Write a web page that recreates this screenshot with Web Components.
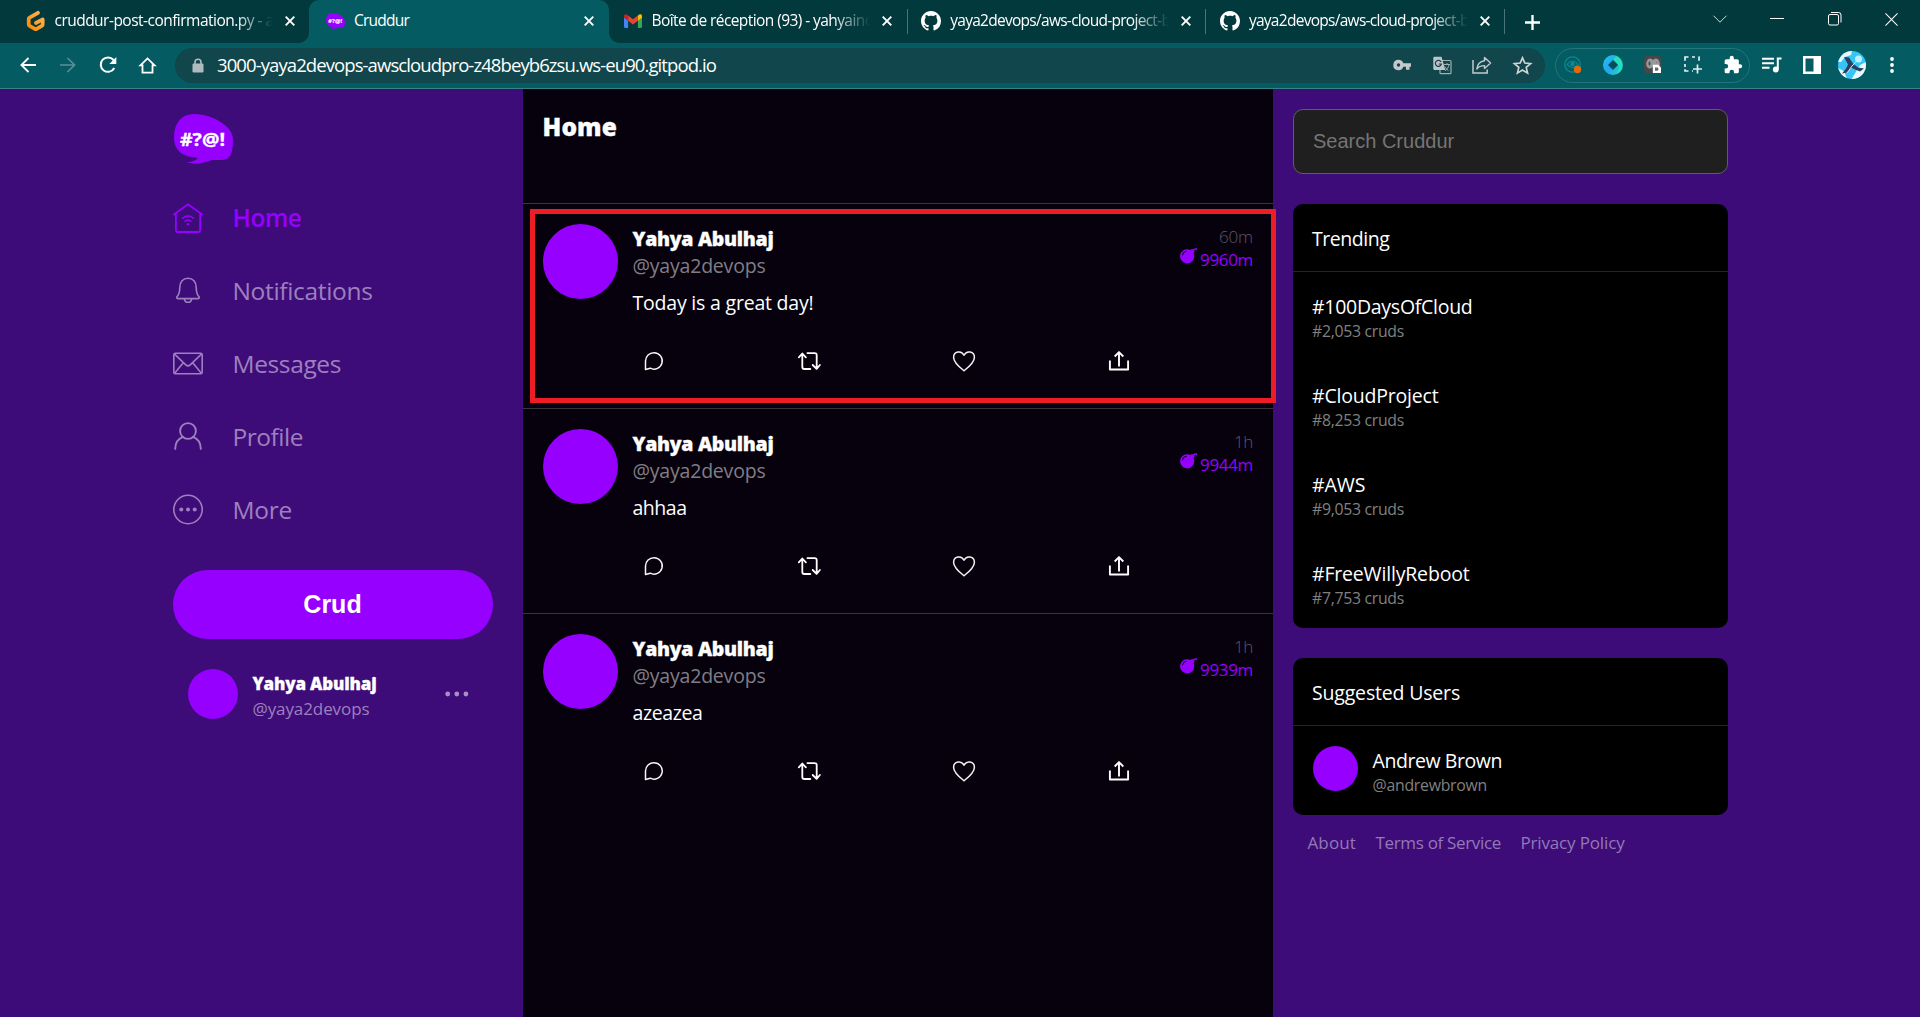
<!DOCTYPE html>
<html lang="fr">
<head>
<meta charset="utf-8">
<title>Cruddur</title>
<style>
html,body{margin:0;height:100%;overflow:hidden;background:#3d0c79}
body{font-family:"Open Sans","Noto Sans",sans-serif}
</style>
</head>
<body>
<cruddur-window></cruddur-window>
<script>
const ICONS = {
  home: ['0 0 30 30', '<g fill="none" stroke="currentColor" stroke-width="1.8" stroke-linecap="round" stroke-linejoin="round"><path d="M.9 11.6 15 1.3l14.1 10.3M2.9 10.4V27a2 2 0 0 0 2 2h20.2a2 2 0 0 0 2-2V10.4"/><path d="M9.6 15.2a8 8 0 0 1 10.8 0M12 18.2a4.6 4.6 0 0 1 6 0" stroke-width="1.5"/></g><circle cx="15" cy="21.2" r="1.3" fill="currentColor"/>'],
  bell: ['0 0 30 30', '<g fill="none" stroke="currentColor" stroke-width="1.6" stroke-linejoin="round"><path d="M6.8 11.2C6.8 6 10 2.2 15 2.2s8.200 3.800 8.200 9c0 5 .9 7.400 2.700 9.400.8 1 .4 2-.8 2H4.900c-1.200 0-1.600-1-.8-2 1.800-2 2.700-4.400 2.700-9.400z"/><path d="M11.300 22.800c.4 2.400 1.800 3.500 3.700 3.500s3.300-1.100 3.700-3.500"/></g>'],
  mail: ['0 0 30 30', '<g fill="none" stroke="currentColor" stroke-width="1.6" stroke-linejoin="round"><rect x=".8" y="4.300" width="28.400" height="20.400" rx="1.500"/><path d="m1.300 4.800 11.500 11c1.300 1.200 3.100 1.200 4.400 0l11.500-11M1.600 24.200l8.700-10.400M28.400 24.200l-8.700-10.400"/></g>'],
  user: ['0 0 30 30', '<g fill="none" stroke="currentColor" stroke-width="1.9" stroke-linecap="round"><circle cx="15" cy="9" r="7.900"/><path d="M2.200 26.900c0-6 3.300-10.300 7.900-12M27.800 26.900c0-6-3.300-10.300-7.900-12"/></g>'],
  more: ['0 0 30 30', '<circle cx="15" cy="14.500" r="14.200" fill="none" stroke="currentColor" stroke-width="1.600"/><g fill="currentColor"><circle cx="8.300" cy="14.500" r="2"/><circle cx="15" cy="14.500" r="2"/><circle cx="21.700" cy="14.500" r="2"/></g>'],
  dots: ['0 0 24 6', '<g fill="currentColor"><circle cx="2.700" cy="3" r="2.400"/><circle cx="11.800" cy="3" r="2.400"/><circle cx="20.900" cy="3" r="2.400"/></g>'],
  bomb: ['0 0 17 15', '<path fill="currentColor" d="M7 1.200c1.400 0 2.500.3 3.500.9L12 .8l.9.6C14 .3 15.500-.2 17 .4v2.300l-.8-.9c-.9-.2-1.600.1-2.200.7l.7.9-1.100 1.500c.4.900.6 1.800.6 2.800A7.100 7.100 0 1 1 7 1.200z"/><path d="M2.400 7.300A4.600 4.600 0 0 1 6.800 3.200" fill="none" stroke="#07010e" stroke-width="1"/>'],
  reply: ['0 0 20 20', '<path d="M10.100 1.700a8.200 8.200 0 1 1-3.800 15.500L1.500 18.500V10a8.400 8.400 0 0 1 8.600-8.300z" fill="none" stroke="#f6f6f6" stroke-width="1.500" stroke-linejoin="round"/>'],
  repost: ['0 0 22 20', '<path d="M.8 6.400 4.300 2.500 7.900 6.400M4.300 3v13a2 2 0 0 0 2 2h6M9.400 2.100h7.300a2 2 0 0 1 2 2v13.200M14.700 14l3.900 3.900 3.300-3.900" fill="none" stroke="#fff" stroke-width="1.800" stroke-linecap="round" stroke-linejoin="round"/>'],
  heart: ['0 0 24 22', '<path d="M12 20.800C8.500 18 1.600 12.500 1.600 7.400c0-5.900 7.800-7.600 10.400-2.100 2.600-5.500 10.400-3.800 10.400 2.100 0 5.100-6.900 10.600-10.400 13.400z" fill="none" stroke="#f2f2f2" stroke-width="1.500" stroke-linejoin="round"/>'],
  share: ['0 0 20 20', '<path d="M.9 9.500v9h18.200v-9M10 15.500V1.100M5.700 5.500 10 1.100l4.300 4.400" fill="none" stroke="#fff" stroke-width="1.900" stroke-linejoin="round"/>'],
  back: ['0 0 16 16', '<path d="M16 8H1.500M8.500 1 1.400 8l7.100 7" fill="none" stroke="currentColor" stroke-width="1.800"/>'],
  fwd: ['0 0 16 16', '<path d="M0 8h14.500M7.500 1l7.100 7-7.100 7" fill="none" stroke="currentColor" stroke-width="1.600"/>'],
  reload: ['0 0 18 18', '<path d="M15.300 12a7.200 7.200 0 1 1-.8-8" fill="none" stroke="currentColor" stroke-width="2"/><path d="M17.300.9v7h-7z" fill="currentColor"/>'],
  house: ['0 0 18 18', '<path d="M3.700 16.500V8.800H1.500L9 1.500l7.500 7.300h-2.200v7.700z" fill="none" stroke="currentColor" stroke-width="1.900"/>'],
  lock: ['0 0 12 15', '<path d="M3 6V4.200a3 3 0 0 1 6 0V6" fill="none" stroke="#b0bbbf" stroke-width="1.600"/><rect x=".5" y="5.500" width="11" height="9" rx="1.200" fill="#b0bbbf"/>'],
  key: ['0 0 18 12', '<path fill="#c4c9cb" fill-rule="evenodd" d="M5.500.8a5.200 5.200 0 0 1 4.900 3.500H18v3.500h-1.500v2.900H13V7.800h-2.600A5.200 5.200 0 1 1 5.500.8zm0 3.500a1.700 1.700 0 1 0 0 3.400 1.700 1.700 0 0 0 0-3.400z"/>'],
  translate: ['0 0 19 19', '<rect x="7" y="4.500" width="11" height="13.200" rx="1" fill="none" stroke="#9fb0b3" stroke-width="1.200"/><path d="M1.500.8h7L12.300 14H1.500A1.200 1.200 0 0 1 .3 12.800V2A1.200 1.200 0 0 1 1.500.8z" fill="#c0c4c6"/><path d="M8.100 6.100A3 3 0 1 0 8.300 8H5.700" fill="none" stroke="#10464c" stroke-width="1.200"/><path d="M11 8.500h6M14 7v1.500m2 0c-.5 3-2 5-4 6.200m-.3-4.200c.8 1.800 2.200 3.200 3.800 4.200" fill="none" stroke="#9fb0b3"/>'],
  send: ['0 0 20 18', '<path d="M1 4v13h14.200v-3.500" fill="none" stroke="#c4c9cb" stroke-width="1.500"/><path d="M12.500 1.500 18.600 7l-6.100 5.400V9.600C9.300 9.600 6.600 10.500 4.800 13c.5-4.300 3.300-7.700 7.700-8.300z" fill="none" stroke="#c4c9cb" stroke-width="1.400" stroke-linejoin="round"/>'],
  star: ['0 0 18 18', '<path d="m9 1.700 2.200 5 5.500.5-4.200 3.600 1.300 5.400L9 13.300l-4.800 2.900 1.300-5.400-4.200-3.600 5.500-.5z" fill="none" stroke="#d0d4d6" stroke-width="1.600"/>'],
  eye: ['0 0 18 18', '<circle cx="8.500" cy="8.500" r="7.700" fill="none" stroke="#0b8790" stroke-width="1.300"/><path d="M3 8.500q5.500-7 11 0-5.500 6-11 0z" fill="none" stroke="#0b8790" stroke-width="1.200"/><circle cx="8.500" cy="8" r="2.300" fill="#068b99"/><circle cx="13.500" cy="13.500" r="3.700" fill="#e26a0a"/>'],
  gem: ['0 0 20 20', '<defs><linearGradient id="a" x1="0" y1="0" x2="1" y2="1"><stop stop-color="#24c4ef"/><stop offset=".5" stop-color="#21a6ef"/><stop offset="1" stop-color="#28dfbd"/></linearGradient></defs><circle cx="10" cy="10" r="10" fill="url(#a)"/><path d="M13 1a10 10 0 0 1 1 18c3-4 3-11-4-14z" fill="#25e2b2"/><path d="m10 5 5 5-5 5-5-5z" fill="#074e5c"/>'],
  cap: ['0 0 18 18', '<rect width="17.500" height="17.500" rx="4" fill="#474747"/><path d="M4 3.300q3-2 5 .7 2-2.700 5-.7c2.500 3 2.500 7-.5 9q-3 1-4.500-1.500-1.500 2.500-4.500 1.500c-3-2-3-6-.5-9z" fill="#96989a"/><path d="M5.500 5.500q1 0 1 2t-1 2-1-2 1-2zm6.500 0q1 0 1 2" fill="#474747"/><path d="M8.800 8.800h5.500L17 11.500V17H8.800z" fill="#fff"/><path d="M11 11.500h2.500q2 1.700 0 3.300H11z" fill="#666"/>'],
  crop: ['0 0 18 18', '<path d="M1 4.800V1h3.500M8 1h3M14.500 1H15v3.800M1 8v3M1 13.200V15h3.500M8 15h1M13.500 8.500v9M9 13h9" fill="none" stroke="#e5efef" stroke-width="1.700"/>'],
  puzzle: ['0 0 24 24', '<path fill="#fff" d="M20.500 11H19V7a2 2 0 0 0-2-2h-4V3.500a2.500 2.500 0 0 0-5 0V5H4a2 2 0 0 0-2 2v3.800h1.500a2.700 2.700 0 0 1 0 5.400H2V20a2 2 0 0 0 2 2h3.800v-1.500a2.700 2.700 0 0 1 5.400 0V22H17a2 2 0 0 0 2-2v-4h1.500a2.500 2.500 0 0 0 0-5z"/>'],
  playlist: ['0 0 20 16', '<path d="M0 1.700h12M0 6.200h12M0 10.700h7.500" stroke="#fff" stroke-width="1.900"/><path d="M19.500 1.400h-3.700V12" fill="none" stroke="#fff" stroke-width="2"/><circle cx="13.800" cy="12.500" r="2.900" fill="#fff"/>'],
  panel: ['0 0 18 18', '<path fill="#fff" fill-rule="evenodd" d="M0 0h18v18H0zm2.500 2.500v13h8v-13z"/>'],
  face: ['0 0 28 28', '<defs><clipPath id="c"><circle cx="14" cy="14" r="14"/></clipPath></defs><g clip-path="url(#c)"><path fill="#37c5f6" d="M0 0h28v28H0z"/><path fill="#eaf8fc" d="M5 0h9l-1 4-6 2-4 5H0V4zM0 17l6 3 3 8H0zM22 14l6-3v11l-6 5-9 2 3-5z"/><circle cx="20.500" cy="8" r="3.500" fill="#bdf1ff"/><path fill="#2b3f5e" d="m6 6 5 .5 4 6 5 4 6 1-4 3-5-2-4-2-4 5-5 1 4-5 2-4z"/><path d="m9 22 5-7 4-4" stroke="#dde" fill="none"/></g>'],
  kebab: ['0 0 6 18', '<g fill="#fff"><circle cx="3" cy="3" r="1.900"/><circle cx="3" cy="9" r="1.900"/><circle cx="3" cy="15" r="1.900"/></g>'],
  close: ['0 0 10 10', '<path d="m.7.7 8.600 8.600M9.300.7.700 9.300" stroke="#fff" stroke-width="1.900"/>'],
  plus: ['0 0 14 14', '<path d="M7 0v14M0 7h14" stroke="#fff" stroke-width="2.200"/>'],
  chevron: ['0 0 14 8', '<path d="m.5.700 6.500 6.500L13.500.7" fill="none" stroke="#cfdada" stroke-width="1"/>'],
  minimise: ['0 0 14 14', '<path d="M0 6.500h14" stroke="#fff" stroke-width="1"/>'],
  restore: ['0 0 14 14', '<g fill="none" stroke="#fff"><rect x=".5" y="2.500" width="10" height="10.500" rx="1.500"/><path d="M3 .5h7.500A2.500 2.500 0 0 1 13 3v7.500"/></g>'],
  quit: ['0 0 14 14', '<path d="m.5.500 13 13M13.500.5l-13 13" stroke="#fff" stroke-width="1.100"/>'],
  gitpod: ['0 0 20 22', '<defs><linearGradient id="g" x1="1" y1="0" x2="0" y2="1"><stop stop-color="#ffb45b"/><stop offset="1" stop-color="#ff8a00"/></linearGradient></defs><path d="M12 2.800 3.600 7.600a1.800 1.800 0 0 0-.9 1.600v5a1.800 1.800 0 0 0 .9 1.600l5.200 3a1.800 1.800 0 0 0 1.800 0l5.200-3a1.800 1.800 0 0 0 .9-1.600V9.400L9.900 13" fill="none" stroke="url(#g)" stroke-width="3.700" stroke-linecap="round" stroke-linejoin="round"/>'],
  gmail: ['0 0 18 14', '<path fill="#4285f4" d="M0 2v10.800c0 .7.500 1.200 1.200 1.200h2.900V6.500L0 3z"/><path fill="#34a853" d="M13.900 14h2.900c.7 0 1.200-.5 1.200-1.200V2.500l-4.100 4z"/><path fill="#fbbc04" d="M13.900 1.800v5l4.100-3V2c0-1.800-2-2.400-3.200-1.300z"/><path fill="#ea4335" d="M4.100 6.800V1.500L9 5.200l4.900-3.700v5.300L9 10.500z"/><path fill="#c5221f" d="M0 2v1.700l4.100 3.100V1.500l-.9-.8C2 -.4 0 .2 0 2z"/>'],
  github: ['0 0 16 16', '<path fill="#fff" d="M8 0C3.580 0 0 3.580 0 8c0 3.540 2.290 6.530 5.470 7.590.4.070.55-.17.55-.38 0-.19-.01-.82-.01-1.490-2.010.37-2.530-.49-2.690-.94-.09-.23-.48-.94-.82-1.130-.28-.15-.68-.52-.01-.53.63-.01 1.080.58 1.230.82.72 1.210 1.870.87 2.330.66.07-.52.28-.87.51-1.070-1.780-.2-3.640-.89-3.640-3.950 0-.87.31-1.590.82-2.150-.08-.2-.36-1.020.08-2.120 0 0 .67-.21 2.200.82.64-.18 1.320-.27 2-.27s1.360.09 2 .27c1.530-1.040 2.200-.82 2.200-.82.44 1.100.16 1.920.08 2.120.51.56.82 1.270.82 2.150 0 3.070-1.870 3.750-3.650 3.950.29.25.54.73.54 1.480 0 1.070-.01 1.930-.01 2.200 0 .21.15.46.55.38A8.010 8.010 0 0 0 16 8c0-4.420-3.580-8-8-8z"/>'],
  bubble: ['0 0 59 50', '<path fill="#9500ff" d="M0 24C0 8 8 0 20 0c18 0 39 12 39 25 0 14-2 21-12 21h-9c-8 3.500-17 4.500-25 2.500 6-1 9-2 11-4.500C8 43 0 36 0 24z"/><text x="6" y="32" font-family="Open Sans" font-weight="700" font-size="18" fill="#fff" stroke="#fff" stroke-width=".3" textLength="45" lengthAdjust="spacingAndGlyphs">#?@!</text>']
};

class UiIcon extends HTMLElement {
  connectedCallback() {
    const [box, body] = ICONS[this.getAttribute('name')];
    const w = this.getAttribute('w'), h = this.getAttribute('h') || w;
    this.attachShadow({mode: 'open'}).innerHTML =
      `<style>:host{display:block;flex:none;width:${w}px;height:${h}px}svg{display:block;width:100%;height:100%;overflow:visible}</style><svg viewBox="${box}">${body}</svg>`;
  }
}

/* Text run whose tracking is tuned so that it fills the width given in "w". */
class FitText extends HTMLElement {
  connectedCallback() {
    const root = this.attachShadow({mode: 'open'});
    root.innerHTML = '<style>:host{display:block;flex:none;white-space:nowrap}span{display:inline-block}</style><span><slot></slot></span>';
    const span = root.querySelector('span'), w = +this.getAttribute('w');
    span.style.letterSpacing = (w - span.getBoundingClientRect().width) / this.textContent.length + 'px';
    this.style.width = w + 'px';
  }
}

const define = (tag, render) => customElements.define(tag, class extends HTMLElement {
  connectedCallback() { this.attachShadow({mode: 'open'}).innerHTML = render(this); }
});
const icon = (n, w, h = w) => `<ui-icon name="${n}" w="${w}" h="${h}"></ui-icon>`;
const fit = (w, t) => `<fit-text w="${w}">${t}</fit-text>`;

define('browser-tab', el => `<style>
:host{display:flex;width:297.700px;height:43px;flex:none;box-sizing:border-box;align-items:center;color:#fff;font-size:15.500px;padding:0 14.500px 1px 13.500px;position:relative}
:host([active]){background:#045b61;border-radius:10px 10px 0 0;width:300px;padding:0 15px 1px 16px}
:host([active])::before,:host([active])::after{content:"";position:absolute;bottom:0;width:10px;height:10px;left:-10px;background:radial-gradient(circle at 0 0,transparent 9.500px,#045b61 10px)}
:host([active])::after{left:auto;right:-10px;background:radial-gradient(circle at 100% 0,transparent 9.500px,#045b61 10px)}
.i{width:20px;margin-right:9px;display:flex;justify-content:center}
.t{flex:1;overflow:hidden;min-width:0;height:24px;line-height:23px;margin-right:12px}
:host([fade]) .t{-webkit-mask:linear-gradient(90deg,#000 83%,transparent);mask:linear-gradient(90deg,#000 83%,transparent)}
</style><div class="i">${icon(el.getAttribute('icon'), el.getAttribute('iw'), el.getAttribute('ih'))}</div><div class="t"><slot></slot></div>${icon('close', 10)}`);

define('tab-strip', () => `<style>
:host{display:flex;height:43px;background:#02393d;padding-left:9px;align-items:center}
i{width:1px;height:25px;background:#4b7478;flex:none}
browser-tab.a{width:300px;padding-left:16.500px;padding-right:14px}
.plus{margin:0 auto 0 19.500px;padding-top:1px}
.win{display:flex;gap:43.500px;align-items:center;padding:0 22px 5px 0}
</style>
<browser-tab class="a" icon="gitpod" iw="20" ih="22" fade>${fit(219, 'cruddur-post-confirmation.py - a')}</browser-tab>
<browser-tab active icon="bubble" iw="19" ih="16">${fit(55, 'Cruddur')}</browser-tab>
<browser-tab icon="gmail" iw="18" ih="14" fade>${fit(220, 'Boîte de réception (93) - yahyainc')}</browser-tab><i></i>
<browser-tab icon="github" iw="20" ih="20" fade>${fit(220, 'yaya2devops/aws-cloud-project-b')}</browser-tab><i></i>
<browser-tab icon="github" iw="20" ih="20" fade>${fit(220, 'yaya2devops/aws-cloud-project-b')}</browser-tab><i></i>
<div class="plus">${icon('plus', 15)}</div>
<div class="win">${icon('chevron', 14, 8)}${icon('minimise', 14)}${icon('restore', 14)}${icon('quit', 13)}</div>`);

define('tool-bar', () => `<style>
:host{display:flex;height:46px;box-sizing:border-box;background:#045b61;border-bottom:1px solid #398187;align-items:center;color:#fff;padding-bottom:1px}
.nav{display:flex;width:175px}.nav>div,.cell{width:40px;display:flex;justify-content:center;align-items:center;flex:none}
.nav{box-sizing:border-box;padding-left:7.500px}
.omni{width:1370px;height:35px;border-radius:18px;background:#10464c;display:flex;align-items:center;box-sizing:border-box;padding:0 3px 0 17px;font-size:18.500px;line-height:34px}
fit-text{margin:0 auto 0 13px}
.ext{width:195px;height:35px;box-sizing:border-box;border:1px solid #25747a;border-radius:18px;margin-left:10px;display:flex;align-items:center;margin-right:2px}
.ext .cell:first-child{margin-left:-3.500px}
.tail{display:flex}
</style>
<div class="nav"><div>${icon('back', 16)}</div><div style="color:#5b9195">${icon('fwd', 16)}</div><div>${icon('reload', 18)}</div><div>${icon('house', 17)}</div></div>
<div class="omni">${icon('lock', 12, 15)}${fit(499, '3000-yaya2devops-awscloudpro-z48beyb6zsu.ws-eu90.gitpod.io')}
<div class="cell">${icon('key', 18, 12)}</div><div class="cell">${icon('translate', 19)}</div><div class="cell">${icon('send', 20, 18)}</div><div class="cell">${icon('star', 19)}</div></div>
<div class="ext"><div class="cell">${icon('eye', 18)}</div><div class="cell">${icon('gem', 20)}</div><div class="cell">${icon('cap', 18)}</div><div class="cell">${icon('crop', 18)}</div><div class="cell">${icon('puzzle', 20)}</div></div>
<div class="tail"><div class="cell">${icon('playlist', 20, 16)}</div><div class="cell">${icon('panel', 18)}</div><div class="cell">${icon('face', 28)}</div><div class="cell">${icon('kebab', 6, 18)}</div></div>`);

define('nav-item', el => `<style>
:host{display:flex;height:73px;align-items:center;gap:29.500px;font-size:24.500px;line-height:34px;color:#9d80bd}
:host([active]){color:#9500ff;font-weight:600}
</style>${icon(el.getAttribute('icon'), 30)}<slot></slot>`);

define('side-nav', () => `<style>
:host{display:block;padding:25px 30px 0 173px;box-sizing:border-box}
.logo{padding-left:1px;height:67px}
button{display:block;width:320px;height:69px;border:0;border-radius:35px;background:#9500ff;color:#fff;font:bold 25px "Liberation Sans",sans-serif;margin-top:24px;padding:0 1px 0 0}
.me{display:flex;align-items:center;margin:30px 0 0 15px;height:50px;width:281px}
.av{width:50px;height:50px;border-radius:50%;background:#9500ff;margin-right:14.500px}
.n{flex:1;line-height:25px;font-size:17px;color:#9d80bd;padding-top:3px}.n b{display:block;font-weight:800;color:#fff;-webkit-text-stroke:.3px #fff}
</style>
<div class="logo">${icon('bubble', 59, 50)}</div>
<nav><nav-item icon="home" active>${fit(69, 'Home')}</nav-item>
<nav-item icon="bell">${fit(140, 'Notifications')}</nav-item>
<nav-item icon="mail">${fit(108.5, 'Messages')}</nav-item>
<nav-item icon="user">${fit(70.5, 'Profile')}</nav-item>
<nav-item icon="more">${fit(59.5, 'More')}</nav-item></nav>
<button>Crud</button>
<div class="me"><div class="av"></div><div class="n"><b>${fit(124, 'Yahya Abulhaj')}</b>${fit(117, '@yaya2devops')}</div><div style="color:#a88fc5">${icon('dots', 24, 6)}</div></div>`);

define('crud-post', el => `<style>
:host{display:block;height:205px;box-sizing:border-box;padding:20px 20px 0 20px;border-bottom:1px solid #38353f;position:relative}
:host(:last-of-type){border-bottom-color:transparent}
:host([marked])::after{content:"";position:absolute;left:7px;top:5px;width:736px;height:184px;border:5px solid #ee1c24;z-index:2}
.top{display:flex;height:75px}
.av{width:75px;height:75px;border-radius:50%;background:#9500ff;margin-right:14.500px}
.n{flex:1;font-size:19.500px;line-height:27px;color:#807e85;padding-top:1px}.n b{display:block;font-weight:800;color:#fff;-webkit-text-stroke:.3px #fff}
.when{display:flex;flex-direction:column;align-items:flex-end;font-size:17px;line-height:23px;color:#5c5966;font-weight:300;padding-top:1px}
.life{display:flex;gap:3px;color:#9500ff;font-weight:400}
.msg{margin:-10px 0 0 89.500px;font-size:19.500px;line-height:27px;color:#fff}
.act{display:flex;margin:34px 0 0 33px;height:22px;align-items:center}
.c{display:flex;justify-content:center;width:155px}
</style>
<div class="top"><div class="av"></div><div class="n"><b>${fit(141, 'Yahya Abulhaj')}</b>${fit(133, '@yaya2devops')}</div>
<div class="when">${fit(el.getAttribute('aw'), el.getAttribute('ago'))}<div class="life">${icon('bomb', 17, 15)}${fit(53, el.getAttribute('life'))}</div></div></div>
<div class="msg"><slot></slot></div>
<div class="act"><span class="c">${icon('reply', 20)}</span><span class="c">${icon('repost', 22, 20)}</span><span class="c">${icon('heart', 24, 22)}</span><span class="c">${icon('share', 20)}</span></div>`);

define('home-feed', () => `<style>
:host{display:block;background:#07010e}
h1{margin:0;height:115px;box-sizing:border-box;border-bottom:1px solid #38353f;padding:21px 19.500px;font-size:24.500px;line-height:34px;font-weight:800;color:#fff;-webkit-text-stroke:.3px #fff}
</style><h1>${fit(74.5, 'Home')}</h1>
<crud-post ago="60m" aw="34" life="9960m" marked>${fit(181, 'Today is a great day!')}</crud-post>
<crud-post ago="1h" aw="19" life="9944m">${fit(54, 'ahhaa')}</crud-post>
<crud-post ago="1h" aw="19" life="9939m">${fit(70, 'azeazea')}</crud-post>`);

define('info-card', el => `<style>
:host{display:block;background:#000;border-radius:10px;width:435px;margin-bottom:30px;color:#fff;font-size:19.500px}
header{height:68px;box-sizing:border-box;border-bottom:1px solid #24242c;padding:21px 19px 0;line-height:27px}
</style><header>${fit(el.getAttribute('hw'), el.getAttribute('heading'))}</header><slot></slot>`);

define('trend-row', el => `<style>
:host{display:block;height:89px;box-sizing:border-box;padding:21px 19px 0;line-height:27px}
.c{font-size:15.800px;line-height:22px;color:#808080}
</style><slot></slot><div class="c">${fit(92, el.getAttribute('count') + ' cruds')}</div>`);

define('side-info', () => `<style>
:host{display:block;padding:20px 0 0 20px}
input{display:block;box-sizing:border-box;width:435px;height:65px;border:1px solid #5f5e5f;border-radius:10px;background:#1f1f1f;padding:0 20px 1px 19px;font:20px "Liberation Sans",sans-serif;margin:0 0 30px}
input::placeholder{color:#757575;opacity:1}
.u{display:flex;padding:20px 20px 24px;height:45px}
.av{width:45px;height:45px;border-radius:50%;background:#9500ff;margin-right:14.500px}
.h{font-size:15.800px;line-height:22px;color:#808080;margin-top:-1px}.n{line-height:29px}
footer{display:flex;gap:19.500px;padding-left:14.500px;margin-top:-15px;font-size:17px;line-height:25px;color:#9379b5}
</style>
<input placeholder="Search Cruddur">
<info-card heading="Trending" hw="77.500">
<trend-row count="#2,053">${fit(160.5, '#100DaysOfCloud')}</trend-row>
<trend-row count="#8,253">${fit(126.5, '#CloudProject')}</trend-row>
<trend-row count="#9,053">${fit(53.5, '#AWS')}</trend-row>
<trend-row count="#7,753">${fit(157.5, '#FreeWillyReboot')}</trend-row></info-card>
<info-card heading="Suggested Users" hw="148"><div class="u"><div class="av"></div><div><div class="n">${fit(129.5, 'Andrew Brown')}</div><div class="h">${fit(114.5, '@andrewbrown')}</div></div></div></info-card>
<footer>${fit(48.5, 'About')}${fit(125.5, 'Terms of Service')}${fit(104, 'Privacy Policy')}</footer>`);

define('cruddur-window', () => `<style>
:host{display:flex;flex-direction:column;width:1920px;height:1017px;overflow:hidden}
main{flex:1;display:grid;grid-template-columns:523px 750px 1fr;background:#3d0c79}
</style><tab-strip></tab-strip><tool-bar></tool-bar><main><side-nav></side-nav><home-feed></home-feed><side-info></side-info></main>`);

customElements.define('ui-icon', UiIcon);
customElements.define('fit-text', FitText);
</script>
</body>
</html>
